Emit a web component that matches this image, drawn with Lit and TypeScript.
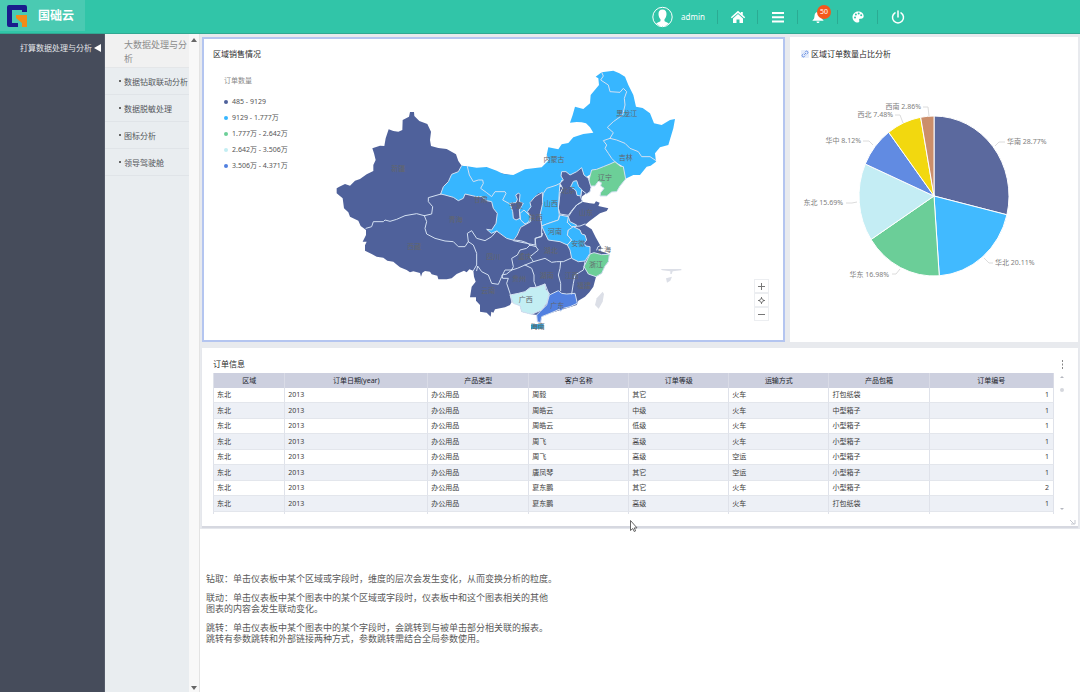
import { LitElement, html, css, svg } from "lit";
import { customElement } from "lit/decorators.js";

const DARK = "#4f619b";
const SKY = "#37b6ff";
const GREEN = "#6ccf98";
const PALE = "#c3eef3";
const ROYAL = "#5180e0";

@customElement("region-map")
class RegionMap extends LitElement {
  static styles = css`
    :host { display: block; }
    svg { display: block; width: 100%; height: auto; }
    .region { stroke: #d3e0f2; stroke-width: 3; stroke-linejoin: round; }
    .land { stroke: none; }
    .border { fill: none; stroke: #d3e0f2; stroke-width: 3; stroke-linejoin: round; stroke-linecap: round; }
    .island { fill: #dcdfe7; }
    .name { font-family: "Noto Sans", "Noto Sans CJK SC", sans-serif; font-size: 21px; fill: #62666c; text-anchor: middle; }
  `;

  private outline =
    "20,385 28,380 45,372 60,377 75,362 90,357 110,343 130,333 130,315 137,300 132,280 127,265 150,257 163,258 167,235 176,208 190,213 205,215 217,210 218,180 237,170 240,156 252,156 253,168 268,183 292,192 303,215 300,240 303,258 325,264 350,267 378,283 385,303 395,317 540,345 690,380 780,390 775,395 755,410 755,425 780,430 793,431 798,424 809,428 805,438 835,445 830,453 810,460 790,475 778,484 765,495 785,508 797,532 810,555 815,565 803,570 838,583 835,605 825,618 815,640 798,650 790,680 778,697 765,710 745,722 740,735 700,748 660,760 635,770 632,788 622,785 622,765 605,763 575,755 570,737 545,725 540,735 525,742 495,748 490,758 484,755 482,770 470,758 450,755 450,735 438,722 438,712 420,712 425,680 437,665 432,650 430,632 418,628 410,637 402,632 380,642 365,655 350,658 325,658 322,647 305,643 300,635 285,633 277,638 273,650 270,639 250,634 240,637 230,630 210,622 198,612 190,605 172,602 160,593 140,590 125,582 105,572 105,556 110,545 98,545 108,525 108,510 92,498 85,482 60,470 55,457 42,445 38,415 20,400";

  private north =
    "395,317 412,319 440,323 470,321 500,332 520,342 550,345 585,328 610,325 635,322 657,300 650,285 655,262 685,268 695,253 715,249 730,232 760,222 790,218 780,202 768,190 755,187 740,186 720,188 728,165 735,140 760,147 780,130 782,105 807,75 805,55 797,50 815,37 850,32 868,40 885,50 895,75 910,105 918,140 938,144 960,160 972,190 995,195 1020,180 1035,177 1030,205 1015,255 990,262 975,280 978,305 962,317 950,320 930,345 910,345 885,357 880,320 855,305 778,345 755,360 695,360 690,370 685,480 690,480 630,490 640,398 625,400 600,425 605,440 600,455 602,485 570,502 562,525 548,540 530,535 510,520 500,513 490,520 484,520 470,508 485,510 498,490 502,460 490,445 485,425 470,422 455,410 440,410 405,402 400,415 385,422 370,412 345,405 332,402 340,380 355,365 365,343 385,335";

  private borders = [
    "108,505 125,500 130,485 160,485 165,480 180,484 200,478 225,467 260,461 283,467",
    "283,467 305,462 308,440 295,425 295,413 333,402",
    "283,467 290,485 285,505 290,522 315,535 345,543 370,545 385,560 405,560 415,545",
    "415,545 412,520 425,512 440,535 465,542 485,530 500,513",
    "415,545 430,555 440,580 440,615 430,632",
    "440,632 443,618 455,635 475,645 485,670 505,673 515,650 525,630 545,630",
    "412,319 418,345 430,365 445,360 458,360 460,370 452,385 470,398 485,410 495,395 525,395 528,400 518,420 540,432",
    "815,37 820,48 812,60 835,75 840,95 870,97 880,85 890,95 883,115 885,135 878,165 850,185 832,202 850,218 840,235",
    "840,235 860,240 885,250 900,265 925,275 935,290 960,290 978,302",
    "840,235 820,242 830,255 825,265 835,280 845,295 855,305",
    "332,402 340,380 355,365 365,343 385,335 395,317",
    "332,402 345,405 370,412 385,422 400,415 405,402 440,410 455,410 470,422 485,425 490,445 502,460 498,490 485,510 470,508 484,520 500,513 530,535 548,540",
  ];

  private innerBorders = [
    "245,360 230,372 216,375 218,385 235,385 230,400 240,430 245,455",
    "245,360 250,350 245,325 262,315 270,300 290,295 300,285 318,290 325,300 300,320 310,335 285,345 262,355 245,360",
    "250,270 272,272 290,278 302,286",
    "285,345 305,355 312,375 312,395 318,410",
    "310,335 345,325 365,337 380,335 400,335 422,325",
    "318,290 315,265 335,260 338,250",
    "392,335 390,355 385,375 392,400 392,422",
    "465,335 460,360 435,375 430,400 425,432",
    "412,217 415,200 425,185 440,165 455,155",
    "412,217 425,230 450,228 465,222",
    "500,300 504,290 512,287",
    "345,402 356,430",
  ];

  private names: [string, number, number][] = [
    ["新疆", 205, 334], ["西藏", 253, 567], ["青海", 377, 487], ["四川", 490, 596],
    ["云南", 475, 698], ["甘肃", 452, 427], ["内蒙古", 672, 307], ["黑龙江", 890, 169],
    ["吉林", 887, 301], ["辽宁", 825, 360], ["宁夏", 558, 445], ["陕西", 617, 481],
    ["山西", 663, 438], ["北京", 715, 400], ["山东", 768, 465], ["河南", 675, 521],
    ["安徽", 745, 558], ["湖北", 662, 578], ["重庆", 585, 596], ["贵州", 567, 663],
    ["湖南", 650, 655], ["江西", 725, 655], ["福建", 762, 683], ["浙江", 798, 620],
    ["上海", 822, 575], ["广西", 587, 726], ["广东", 682, 743], ["海南", 623, 808],
  ];

  render() {
    return html`<svg viewBox="-93 0 1353 825" role="img" aria-label="区域销售情况地图">
      <polygon points=${this.outline} fill=${DARK} class="land"></polygon>
      <polygon points=${this.north} fill=${SKY} class="land"></polygon>
      <polygon class="region" fill=${GREEN} points="880,320 870,318 855,305 840,312 820,320 800,328 785,330 780,348 776,365 782,378 795,378 805,364 814,368 812,378 822,385 812,398 810,408 830,408 845,396 860,395 870,378 887,357"></polygon>
      <g transform="translate(300 270)">
        <polygon class="region" fill=${DARK} points="395,65 408,65 420,75 440,65 455,53 462,75 475,85 483,112 480,125 470,132 455,120 452,142 458,155 440,165 428,178 415,196 390,192 385,175 390,130 398,115 390,100 400,90 393,78"></polygon>
        <polygon class="region" fill=${SKY} points="430,94 440,92 446,110 455,118 452,138 441,136 438,122 422,110"></polygon>
        <polygon class="region" fill=${SKY} points="390,100 378,106 350,115 340,130 335,160 330,195 335,228 350,222 385,210 388,195 385,175 388,125"></polygon>
        <polygon class="region" fill=${SKY} points="335,228 350,222 385,210 390,195 415,200 420,215 440,225 432,235 415,240 412,255 425,270 412,285 390,275 355,270 345,250"></polygon>
        <polygon class="region" fill=${SKY} points="430,230 450,240 455,252 465,255 470,270 462,280 468,288 480,290 480,310 465,333 445,335 425,325 420,300 412,285 425,270 412,255 415,240"></polygon>
        <polygon class="region" fill=${DARK} points="240,160 258,158 262,148 257,135 266,129 270,134 268,155 280,160 268,180 270,205 258,210 250,205 248,185"></polygon>
        <polygon class="region" fill=${DARK} points="337,127 315,140 300,158 303,170 292,185 302,198 302,215 272,232 262,255 250,272 315,285 316,265 335,258 335,228 330,195 338,160"></polygon>
        <polygon class="region" fill=${SKY} points="270,190 282,180 302,200 296,216 285,222 272,210"></polygon>
        <polygon class="region" fill=${GREEN} points="480,312 492,308 515,314 538,313 535,335 525,348 515,370 498,380 475,372 462,350"></polygon>
        <polygon class="region" fill=${PALE} points="240,435 265,430 285,425 300,413 318,412 345,402 347,418 358,430 350,460 335,480 305,493 275,485 270,467 250,460"></polygon>
        <polygon class="region" fill=${ROYAL} points="358,435 385,422 395,430 410,432 435,430 442,460 420,470 400,475 392,484 388,478 360,490 335,500 332,518 322,515 320,495 330,485 350,465"></polygon>
        <polygon fill="#2d9fd2" points="303,523 341,522 341,536 303,537"></polygon>
        <polygon class="island" points="518,425 522,432 518,455 506,476 495,465 500,445"></polygon>
        ${this.innerBorders.map((p) => svg`<polyline class="border" points=${p}></polyline>`)}
      </g>
      <path class="island" d="M992 627h62v4l-26 3-3 8h-4v-8l-24-3zM1008 655l18-5-5 12-10 6z"></path>
      ${this.borders.map((p) => svg`<polyline class="border" points=${p}></polyline>`)}
      ${this.names.map(([n, x, y]) => svg`<text class="name" x=${x} y=${y}>${n}</text>`)}
    </svg>`;
  }
}

@customElement("share-pie")
class SharePie extends LitElement {
  static styles = css`
    :host { display: block; }
    svg { display: block; width: 100%; height: auto; }
    .slice { stroke: #fff; stroke-width: 1; stroke-linejoin: round; }
    .lead { fill: none; stroke: #dcdcdc; stroke-width: 1; }
    .label { font-family: "Noto Sans", "Noto Sans CJK SC", sans-serif; font-size: 7px; fill: #808080; }
    .end { text-anchor: end; }
  `;

  private data = [
    { name: "华南", pct: 28.77, color: "#5b699e", x: 217, y: 48, end: false, lead: "205,50 209,46 215,46" },
    { name: "华北", pct: 20.11, color: "#41baff", x: 205, y: 169, end: false, lead: "194,162 199,167 203,167" },
    { name: "华东", pct: 16.98, color: "#6bce98", x: 99, y: 181, end: true, lead: "110,173 106,178 102,178" },
    { name: "东北", pct: 15.69, color: "#c4edf4", x: 53, y: 109, end: true, lead: "67,106 62,107 56,107" },
    { name: "华中", pct: 8.12, color: "#618be2", x: 71, y: 47, end: true, lead: "83,49 79,45 73,45" },
    { name: "西北", pct: 7.48, color: "#f2d80f", x: 103, y: 21, end: true, lead: "113,27 110,19 105,19" },
    { name: "西南", pct: 2.86, color: "#cb8e6b", x: 131, y: 13, end: true, lead: "139,20 138,11 133,11" },
  ];

  render() {
    const cx = 144, cy = 100, rx = 75, ry = 80;
    let sum = 0;
    const at = (p: number) => {
      const a = (p / 100) * Math.PI * 2;
      return `${(cx + rx * Math.sin(a)).toFixed(2)} ${(cy - ry * Math.cos(a)).toFixed(2)}`;
    };
    return html`<svg viewBox="0 0 288 200" role="img" aria-label="区域订单数量占比分析">
      ${this.data.map((d) => {
        const from = at(sum);
        sum += d.pct;
        return svg`
          <path class="slice" fill=${d.color} d="M${cx} ${cy}L${from}A${rx} ${ry} 0 0 1 ${at(sum)}Z"></path>
          <polyline class="lead" points=${d.lead}></polyline>
          <text class="label ${d.end ? "end" : ""}" x=${d.x} y=${d.y}>${d.name} ${d.pct}%</text>`;
      })}
    </svg>`;
  }
}

@customElement("order-table")
class OrderTable extends LitElement {
  static styles = css`
    :host { display: block; }
    table { width: 100%; height: 141px; border-collapse: separate; border-spacing: 0; table-layout: fixed; font-size: 7px; line-height: 10px; color: #3c3c3c; }
    th, td { box-sizing: border-box; padding: 0 3px; border-right: 1px solid #dfe2ea; white-space: nowrap; overflow: hidden; }
    th { height: 15px; background: #cdd0df; font-weight: 400; color: #22252c; border-color: #d9dbe6; }
    td { height: 15px; text-align: left; border-bottom: 1px solid #e3e6ec; }
    th:first-child, td:first-child { border-left: 1px solid #dfe2ea; }
    .alt td { background: #edf0f6; }
    td.num { text-align: right; padding-right: 4px; }
    .more td { height: 2px; border-bottom: 0; padding: 0; line-height: 0; }
    .c1 { width: 8.6%; } .c2 { width: 17%; } .c3 { width: 12%; } .c4 { width: 11.9%; }
    .c5 { width: 11.9%; } .c6 { width: 11.9%; } .c7 { width: 11.9%; }
  `;

  private heads = ["区域", "订单日期(year)", "产品类型", "客户名称", "订单等级", "运输方式", "产品包箱", "订单编号"];
  private rows = [
    ["周毅", "其它", "火车", "打包纸袋", 1],
    ["周皓云", "中级", "火车", "中型箱子", 1],
    ["周皓云", "低级", "火车", "小型箱子", 1],
    ["周飞", "高级", "火车", "小型箱子", 1],
    ["周飞", "高级", "空运", "小型箱子", 1],
    ["唐凤琴", "其它", "空运", "小型箱子", 1],
    ["夏东鹏", "其它", "火车", "小型箱子", 2],
    ["夏东鹏", "高级", "火车", "打包纸袋", 1],
  ];

  render() {
    return html`<table aria-label="订单信息">
      <thead><tr>${this.heads.map((h, i) => html`<th scope="col" class="c${i + 1}">${h}</th>`)}</tr></thead>
      <tbody>
        ${this.rows.map((r, i) => html`<tr class=${i % 2 ? "alt" : ""}>
          <td>东北</td><td>2013</td><td>办公用品</td>
          ${r.map((c, j) => html`<td class=${j === 4 ? "num" : ""}>${c}</td>`)}
        </tr>`)}
        <tr class="more" aria-hidden="true">${this.heads.map(() => html`<td></td>`)}</tr>
      </tbody>
    </table>`;
  }
}

@customElement("app-root")
class AppRoot extends LitElement {
  static styles = css`
    :host { display: flex; flex-direction: column; min-height: 100vh; position: relative; background: #fff; font-family: "Noto Sans", "Noto Sans CJK SC", sans-serif; font-size: 8px; color: #444; }
    * { box-sizing: border-box; }
    button { border: 0; padding: 0; margin: 0; background: none; font: inherit; color: inherit; }
    a { color: inherit; text-decoration: none; }
    svg { display: block; }
    h1, h2, p, ul { margin: 0; padding: 0; font-weight: 400; }
    ul { list-style: none; }

    header { display: flex; height: 34px; background: #31c5a8; border-bottom: 1px solid #31a892; color: #fff; }
    .brand { display: flex; align-items: center; gap: 10px; width: 85px; height: 31px; padding-left: 6px; background: #4acab2; }
    .brand h1 { font-size: 12px; font-weight: 700; line-height: 18px; white-space: nowrap; }
    .tools { display: flex; align-items: center; margin-left: auto; padding-right: 163px; }
    .user { display: flex; align-items: center; gap: 8px; padding-right: 12px; font-size: 8px; line-height: 12px; }
    .tool { position: relative; display: flex; align-items: center; justify-content: center; width: 40px; height: 14px; border-left: 1px solid #2bab93; }
    .badge { position: absolute; left: 19px; top: -12px; width: 14px; height: 14px; border-radius: 7px; background: #f4581c; font-size: 7px; line-height: 14px; text-align: center; }
    .tool .badge { top: -5px; }

    .body { display: flex; flex: 1; }
    .nav { width: 105px; flex: none; background: #464c5b; color: #e4e6ea; border-right: 1px solid #555b69; }
    .nav a { display: flex; align-items: center; justify-content: flex-end; gap: 2px; height: 28px; padding-right: 3px; line-height: 12px; white-space: nowrap; }
    .sub { width: 84px; flex: none; background: #e9edf0; overflow: hidden; }
    .sub h2 { height: 34px; padding: 4px 0 0 19px; background: #f1f1f1; font-size: 9px; line-height: 14px; color: #8b8b8b; border-bottom: 1px solid #e4e6e8; }
    .sub a { display: flex; align-items: center; gap: 3px; height: 27px; padding-left: 14px; border-bottom: 1px solid #e0e4e8; white-space: nowrap; color: #55585c; }
    .dot { width: 2px; height: 2px; flex: none; background: #666; }
    .scroll { display: flex; flex-direction: column; justify-content: space-between; align-items: center; width: 11px; flex: none; padding: 4px 0 2px; background: #f8f8f8; border-right: 1px solid #e3e3e3; }
    main { flex: 1; min-width: 0; }

    .board { display: grid; grid-template-columns: 583fr 288fr; gap: 6px 5px; padding: 3px 2px 3px; background: #e8eaee; }
    .card { background: #fff; }
    .title { font-size: 8px; line-height: 12px; color: #2c2c2c; white-space: nowrap; }
    .map { border: 2px solid #b4c5f0; padding: 9px 9px 5px; }
    .row { display: flex; }
    .legend { width: 86px; flex: none; padding: 15px 0 0 11px; font-size: 7px; line-height: 16px; color: #555; white-space: nowrap; }
    .legend p { line-height: 12px; margin-bottom: 7px; color: #888; }
    .legend li { display: flex; align-items: center; gap: 4px; }
    .key { width: 4px; height: 4px; border-radius: 2px; }
    region-map { flex: 1; min-width: 0; }
    .zoom { display: flex; flex-direction: column; justify-content: flex-end; align-items: center; width: 24px; flex: none; padding: 0 2px 14px 0; }
    .zoom button { display: flex; align-items: center; justify-content: center; width: 15px; height: 14px; border: 1px solid #eceef1; }
    .share { padding: 11px 0 0; }
    .share .title { display: flex; align-items: center; gap: 2px; padding-left: 11px; }
    share-pie { margin-top: 36px; }
    .orders { grid-column: 1 / -1; padding: 10px 9px 12px 11px; box-shadow: 0 2px 1px #d6d8e0; }
    .head { display: flex; justify-content: space-between; align-items: center; height: 12px; margin-bottom: 3px; }
    .kebab { display: flex; width: 12px; height: 12px; align-items: center; justify-content: center; }
    order-table { flex: 1; min-width: 0; }
    .bar { display: flex; flex-direction: column; align-items: center; width: 15px; flex: none; padding: 3px 0 4px; }
    .thumb { width: 4px; height: 4px; border-radius: 2px; background: #d5d7dd; margin-top: 10px; }
    .bar .down { margin-top: auto; }

    .notes { display: flex; flex-direction: column; gap: 8px; padding: 44px 6px 20px; font-size: 9px; line-height: 11px; color: #5a5a5a; }
    .cursor { position: absolute; left: 630px; top: 520px; }
    .grip { position: absolute; right: 4px; top: 519px; }
  `;

  private links = ["数据钻取联动分析", "数据脱敏处理", "图标分析", "领导驾驶舱"];
  private ranges = [
    ["485 - 9129", DARK],
    ["9129 - 1.777万", SKY],
    ["1.777万 - 2.642万", GREEN],
    ["2.642万 - 3.506万", PALE],
    ["3.506万 - 4.371万", ROYAL],
  ];

  render() {
    return html`
      <header>
        <div class="brand">
          <svg width="22" height="24" viewBox="0 0 22 24" aria-hidden="true">
            <path fill="#1a1c8c" d="M3 1h16q2 0 2 2v5h-5V6H6v13h6v4H3q-2 0-2-2V3q0-2 2-2z"></path>
            <path fill="#f28c18" d="M10 11h11v12h-5v-4l-6-5z"></path>
          </svg>
          <h1>国础云</h1>
        </div>
        <div class="tools">
          <div class="user">
            <svg width="21" height="22" viewBox="0 0 21 22" aria-hidden="true">
              <circle cx="10.500" cy="11" r="9.700" fill="none" stroke="#fff" stroke-width="1"></circle>
              <path fill="#fff" d="M10.500 3.500c2.700 0 4 1.700 4 4.500 0 2.200-.8 4.300-2 5.200v1.800c0 .8 2.900 1.200 4.400 2.400a9 9 0 0 1-12.800 0c1.500-1.200 4.400-1.600 4.400-2.400v-1.800c-1.200-.9-2-3-2-5.200 0-2.800 1.300-4.500 4-4.500z"></path>
            </svg>
            <span>admin</span>
          </div>
          <button class="tool" aria-label="首页">
            <svg width="16" height="14" viewBox="0 0 16 14" fill="#fff"><path d="M8 .8L.8 7.200l1 1.100L8 2.900l6.200 5.400 1-1.100-2.400-2.100V2h-2v1.300z"></path><path d="M3 8.400L8 4.100l5 4.300V13H9.500V9.500h-3V13H3z"></path></svg>
          </button>
          <button class="tool" aria-label="菜单">
            <svg width="14" height="12" viewBox="0 0 14 12" fill="#fff"><path d="M1 1h12v2H1zM1 5.200h12v2H1zM1 9.500h12v2H1z"></path></svg>
          </button>
          <button class="tool" aria-label="通知 50">
            <svg width="14" height="14" viewBox="0 0 14 14" fill="#fff"><path d="M7 2c-2.600 0-3.300 2-3.500 4C3.300 8.500 3 9 1.300 10.700h11.400C11 9 10.700 8.500 10.500 6 10.300 4 9.600 2 7 2zM5.500 11.500h3c0 2-3 2-3 0z"></path></svg>
            <span class="badge">50</span>
          </button>
          <button class="tool" aria-label="主题">
            <svg width="14" height="14" viewBox="0 0 14 14"><path fill="#fff" d="M7 1.500c3.400 0 5.700 2 5.700 4.600 0 2-1.500 2.900-3 2.700-1.400-.2-1.900.5-1.500 1.500.4 1.200.1 2.300-1.300 2.300C3.600 12.600 1.500 10 1.500 7S4 1.500 7 1.500z"></path><g fill="#31c5a8"><circle cx="4" cy="7.400" r="1"></circle><circle cx="4.900" cy="4.600" r="1"></circle><circle cx="7.700" cy="3.600" r="1"></circle><circle cx="10.200" cy="5.200" r="1"></circle></g></svg>
          </button>
          <button class="tool" aria-label="退出">
            <svg width="14" height="14" viewBox="0 0 14 14" fill="none" stroke="#fff" stroke-width="1.500" stroke-linecap="round"><path d="M4 2.800a5.500 5.500 0 1 0 6 0M7 1v6"></path></svg>
          </button>
        </div>
      </header>
      <div class="body">
        <nav class="nav">
          <a href="#">打算数据处理与分析
            <svg width="7" height="8" viewBox="0 0 7 8" fill="#fff"><path d="M0 4l7-4v8z"></path></svg>
          </a>
        </nav>
        <nav class="sub">
          <h2>大数据处理与分析</h2>
          ${this.links.map((l) => html`<a href="#"><span class="dot"></span>${l}</a>`)}
        </nav>
        <div class="scroll" aria-hidden="true">
          <svg width="6" height="4" viewBox="0 0 6 4" fill="#666"><path d="M0 4l3-4 3 4z"></path></svg>
          <svg width="6" height="4" viewBox="0 0 6 4" fill="#666"><path d="M0 0h6L3 4z"></path></svg>
        </div>
        <main>
          <div class="board">
            <section class="card map">
              <h2 class="title">区域销售情况</h2>
              <div class="row">
                <div class="legend">
                  <p>订单数量</p>
                  <ul>${this.ranges.map(([t, c]) => html`<li><span class="key" style="background:${c}"></span>${t}</li>`)}</ul>
                </div>
                <region-map></region-map>
                <div class="zoom">
                  <button aria-label="放大"><svg width="7" height="7" viewBox="0 0 7 7" stroke="#777"><path d="M0 3.500h7M3.500 0v7"></path></svg></button>
                  <button aria-label="复位"><svg width="7" height="7" viewBox="0 0 7 7" stroke="#777" fill="none"><path d="M3.500 0v2M3.500 5v2M0 3.500h2M5 3.500h2"></path><circle cx="3.500" cy="3.500" r="1.800"></circle></svg></button>
                  <button aria-label="缩小"><svg width="7" height="7" viewBox="0 0 7 7" stroke="#777"><path d="M0 3.500h7"></path></svg></button>
                </div>
              </div>
            </section>
            <section class="card share">
              <h2 class="title">
                <svg width="8" height="8" viewBox="0 0 8 8" aria-hidden="true"><rect width="8" height="8" rx="1" fill="#e6edfb"></rect><path d="M3.200 4.800l1.800-1.800M3.800 2.300l.8-.8a1.200 1.200 0 0 1 1.900 1.900l-.9.900M4.200 5.700l-.8.800a1.200 1.200 0 0 1-1.900-1.900l.9-.9" fill="none" stroke="#5c86de" stroke-width=".9"></path></svg>
                区域订单数量占比分析
              </h2>
              <share-pie></share-pie>
            </section>
            <section class="card orders">
              <div class="head">
                <h2 class="title">订单信息</h2>
                <button class="kebab" aria-label="更多"><svg width="2" height="9" viewBox="0 0 2 9" fill="#888"><path d="M0 0h1v2H0zM0 3.500h1v2H0zM0 7h1v2H0z"></path></svg></button>
              </div>
              <div class="row">
                <order-table></order-table>
                <div class="bar" aria-hidden="true">
                  <svg width="4" height="2" viewBox="0 0 4 2" fill="#b5b8c0"><path d="M0 2l2-2 2 2z"></path></svg>
                  <span class="thumb"></span>
                  <svg class="down" width="4" height="2" viewBox="0 0 4 2" fill="#b5b8c0"><path d="M0 0h4L2 2z"></path></svg>
                </div>
              </div>
            </section>
          </div>
          <div class="notes">
            <p>钻取：单击仪表板中某个区域或字段时，维度的层次会发生变化，从而变换分析的粒度。</p>
            <p>联动：单击仪表板中某个图表中的某个区域或字段时，仪表板中和这个图表相关的其他<br />图表的内容会发生联动变化。</p>
            <p>跳转：单击仪表板中某个图表中的某个字段时，会跳转到与被单击部分相关联的报表。<br />跳转有参数跳转和外部链接两种方式，参数跳转需结合全局参数使用。</p>
          </div>
        </main>
      </div>
      <svg class="grip" width="6" height="6" viewBox="0 0 6 6" fill="none" stroke="#c5c8d0" aria-hidden="true"><path d="M0 1l4 4M5 1v4H1"></path></svg>
      <svg class="cursor" width="9" height="12" viewBox="0 0 9 12" aria-hidden="true"><path d="M.5.500v10l2.300-2 1.400 3 1.400-.6-1.300-3H7z" fill="#fff" stroke="#555" stroke-width=".9"></path></svg>
    `;
  }
}
